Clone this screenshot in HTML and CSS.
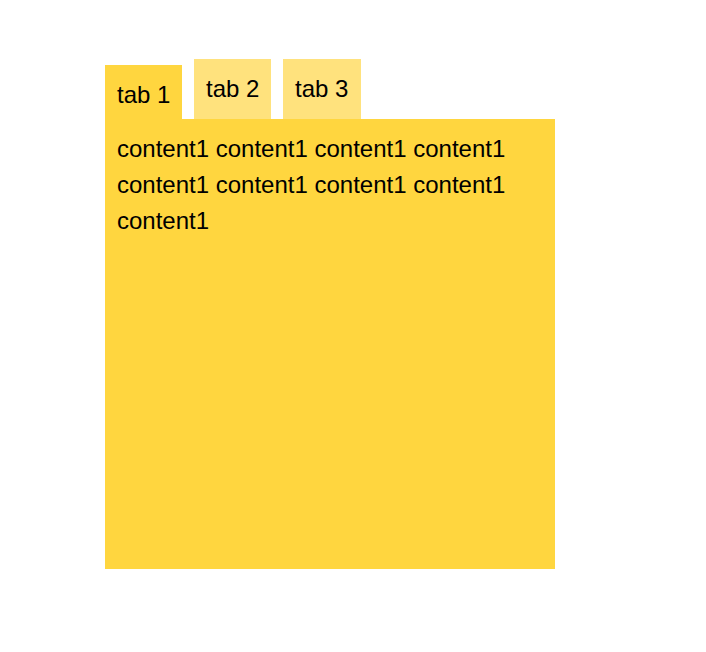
FILE: index.html
```html
<!DOCTYPE html>
<html>
<head>
<meta charset="utf-8">
<link rel="stylesheet" href="styles.css">
</head>
<body>
<div class="tabs">
  <div class="tab-list">
    <div class="tab active">tab 1</div>
    <div class="tab">tab 2</div>
    <div class="tab">tab 3</div>
  </div>
  <div class="panel">content1 content1 content1 content1 content1 content1 content1 content1 content1</div>
</div>
</body>
</html>
```
FILE: styles.css
```css
html, body {
  margin: 0;
  padding: 0;
  background: #ffffff;
}
body {
  font-family: "Liberation Sans", Arial, sans-serif;
  font-size: 24px;
  color: #000;
}
.tabs {
  padding: 59px 0 0 105px;
  width: 450px;
}
.tab-list {
  display: flex;
  align-items: flex-end;
  gap: 12px;
  height: 60px;
}
.tab {
  box-sizing: border-box;
  width: 77px;
  height: 60px;
  padding: 12px 12px 0;
  line-height: 36px;
  white-space: nowrap;
  background: #ffe27d;
}
.tab:last-child {
  width: 78px;
}
.tab.active {
  height: 54px;
  background: #ffd63f;
}
.panel {
  box-sizing: border-box;
  width: 450px;
  height: 450px;
  padding: 12px;
  line-height: 36px;
  background: #ffd63f;
}
```
